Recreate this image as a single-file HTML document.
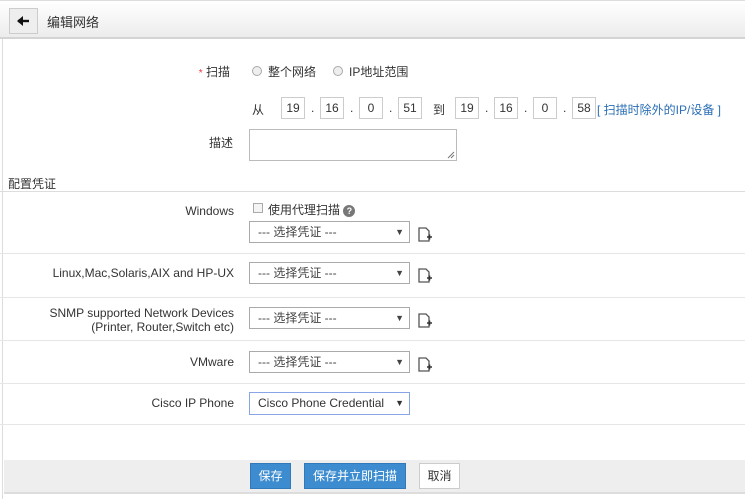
<!DOCTYPE html><html><head><meta charset="utf-8"><style>
*{box-sizing:border-box;margin:0;padding:0}
body{width:745px;height:499px;background:#fff;font-family:"Liberation Sans","Noto Sans CJK SC",sans-serif;font-size:12px;color:#333;position:relative;overflow:hidden}
.a{position:absolute}
.hdr{left:0;top:0;width:745px;height:39px;background:linear-gradient(#fff,#ececec);border-bottom:2px solid #d4d4d4;border-top:1px solid #ddd}
.back{left:9px;top:8px;width:29px;height:26px;border:1px solid #ccc;background:#eee}
.lbl{text-align:right;white-space:nowrap}
.ip{width:24px;height:22px;border:1px solid #ccc;text-align:center;line-height:20px}
.sel{width:161px;height:22px;border:1px solid #aaa;padding-left:8px;line-height:20px;color:#444}
.sel:after{content:"▼";position:absolute;right:5px;top:0;font-size:9px}
.sep{left:0;width:745px;height:1px;background:#e6e6e6}
.radio{width:10px;height:10px;border:1px solid #aaa;border-radius:50%;background:#eee}
.btn{height:26px;line-height:24px;text-align:center;color:#fff;background:#3d8cd0;border:1px solid #3179b8;font-size:12px}
</style></head><body>
<div class="a hdr"></div>
<div class="a back"><svg width="27" height="24"><path d="M8 12h11" stroke="#111" stroke-width="2.4"/><path d="M7 12l6-5v10z" fill="#111"/></svg></div>
<div class="a" style="left:47px;top:12px;font-size:13px">编辑网络</div>
<div class="a" style="left:2px;top:39px;width:1px;height:460px;background:#ddd"></div>
<div class="a lbl" style="left:160px;top:63px;width:70px"><span style="color:#e33;font-size:10px">*</span> 扫描</div>
<div class="a radio" style="left:252px;top:66px"></div><div class="a" style="left:268px;top:63px">整个网络</div>
<div class="a radio" style="left:333px;top:66px"></div><div class="a" style="left:349px;top:63px">IP地址范围</div>
<div class="a" style="left:252px;top:101px">从</div>
<div class="a ip" style="left:281px;top:97px">19</div><div class="a" style="left:311px;top:101px">.</div>
<div class="a ip" style="left:320px;top:97px">16</div><div class="a" style="left:350px;top:101px">.</div>
<div class="a ip" style="left:359px;top:97px">0</div><div class="a" style="left:389px;top:101px">.</div>
<div class="a ip" style="left:398px;top:97px">51</div>
<div class="a" style="left:433px;top:101px">到</div>
<div class="a ip" style="left:455px;top:97px">19</div><div class="a" style="left:485px;top:101px">.</div>
<div class="a ip" style="left:494px;top:97px">16</div><div class="a" style="left:524px;top:101px">.</div>
<div class="a ip" style="left:533px;top:97px">0</div><div class="a" style="left:563px;top:101px">.</div>
<div class="a ip" style="left:572px;top:97px">58</div>
<div class="a" style="left:597px;top:101px;color:#2a6eb5">[ 扫描时除外的IP/设备 ]</div>
<div class="a lbl" style="left:160px;top:134px;width:73px">描述</div>
<div class="a" style="left:249px;top:129px;width:208px;height:32px;border:1px solid #bbb"><svg class="a" style="right:1px;bottom:1px" width="8" height="8"><path d="M7 1L1 7M7 4L4 7" stroke="#777"/></svg></div>
<div class="a" style="left:8px;top:175px">配置凭证</div>
<div class="a" style="left:0;top:191px;width:745px;height:1px;background:#ddd"></div>
<div class="a lbl" style="left:100px;top:204px;width:134px">Windows</div>
<div class="a" style="left:253px;top:203px;width:10px;height:10px;border:1px solid #aaa;background:#f4f4f4"></div>
<div class="a" style="left:268px;top:201px">使用代理扫描 <span style="display:inline-block;width:12px;height:12px;border-radius:50%;background:#777;color:#fff;font-size:9px;text-align:center;line-height:12px;font-weight:bold">?</span></div>
<div class="a sel" style="left:249px;top:221px">--- 选择凭证 ---</div>
<div class="a sep" style="top:253px"></div>
<div class="a lbl" style="left:20px;top:266px;width:214px">Linux,Mac,Solaris,AIX and HP-UX</div>
<div class="a sel" style="left:249px;top:262px">--- 选择凭证 ---</div>
<div class="a sep" style="top:297px"></div>
<div class="a lbl" style="left:20px;top:306px;width:214px;line-height:14px">SNMP supported Network Devices<br>(Printer, Router,Switch etc)</div>
<div class="a sel" style="left:249px;top:307px">--- 选择凭证 ---</div>
<div class="a sep" style="top:340px"></div>
<div class="a lbl" style="left:100px;top:355px;width:134px">VMware</div>
<div class="a sel" style="left:249px;top:351px">--- 选择凭证 ---</div>
<div class="a sep" style="top:383px"></div>
<div class="a lbl" style="left:100px;top:396px;width:134px">Cisco IP Phone</div>
<div class="a sel" style="left:249px;top:392px;width:161px;height:23px;border-color:#8aa4e8;color:#333;line-height:21px">Cisco Phone Credential</div>
<div class="a sep" style="top:424px"></div>
<svg class="a" style="left:418px;top:227px" width="14" height="16"><path d="M1 1h7l3 3v10H1z" fill="none" stroke="#555" stroke-width="1.3"/><path d="M9 10h5M11.5 7.5v5" stroke="#333" stroke-width="1.6"/></svg>
<svg class="a" style="left:418px;top:268px" width="14" height="16"><path d="M1 1h7l3 3v10H1z" fill="none" stroke="#555" stroke-width="1.3"/><path d="M9 10h5M11.5 7.5v5" stroke="#333" stroke-width="1.6"/></svg>
<svg class="a" style="left:418px;top:313px" width="14" height="16"><path d="M1 1h7l3 3v10H1z" fill="none" stroke="#555" stroke-width="1.3"/><path d="M9 10h5M11.5 7.5v5" stroke="#333" stroke-width="1.6"/></svg>
<svg class="a" style="left:418px;top:357px" width="14" height="16"><path d="M1 1h7l3 3v10H1z" fill="none" stroke="#555" stroke-width="1.3"/><path d="M9 10h5M11.5 7.5v5" stroke="#333" stroke-width="1.6"/></svg>
<div class="a" style="left:4px;top:460px;width:741px;height:34px;background:#eee;border-bottom:2px solid #ddd"></div>
<div class="a btn" style="left:250px;top:463px;width:41px">保存</div>
<div class="a btn" style="left:304px;top:463px;width:102px">保存并立即扫描</div>
<div class="a btn" style="left:419px;top:463px;width:41px;background:#fff;color:#333;border-color:#ccc">取消</div>
</body></html>
